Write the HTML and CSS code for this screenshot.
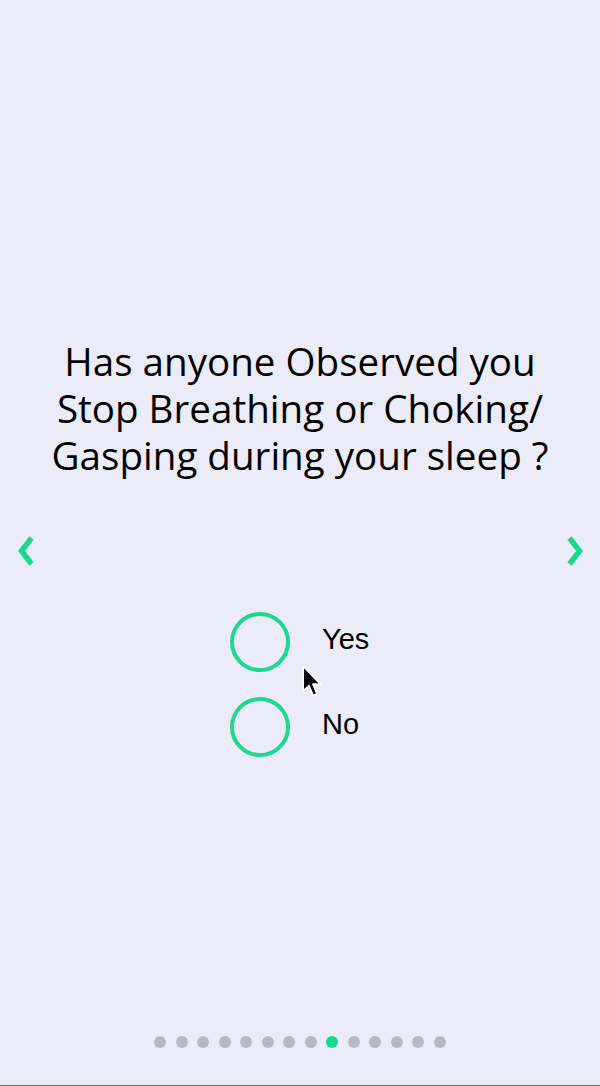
FILE: index.html
```html
<!DOCTYPE html>
<html>
<head>
<meta charset="utf-8">
<link rel="stylesheet" href="styles.css">
</head>
<body>
<div class="screen">
  <h1 class="question">Has anyone Observed you<br>Stop Breathing or Choking/<br>Gasping during your sleep ?</h1>
  <div class="nav">
    <svg class="chev" width="18" height="32" viewBox="0 0 18 32"><path d="M14.5 3 L4.5 16 L14.5 29" fill="none" stroke="#19d98f" stroke-width="5.5"/></svg>
    <svg class="chev" width="18" height="32" viewBox="0 0 18 32"><path d="M3.5 3 L13.5 16 L3.5 29" fill="none" stroke="#19d98f" stroke-width="5.5"/></svg>
  </div>
  <div class="options">
    <label class="option"><span class="radio"></span><span class="label">Yes</span></label>
    <label class="option"><span class="radio"></span><span class="label">No</span></label>
    <svg class="cursor" width="21" height="34" viewBox="0 0 18 29"><path d="M1 1 L1 22 L6 17.5 L9.5 26 L12.8 24.6 L9.4 16.3 L15.8 16.3 Z" fill="#000" stroke="#fff" stroke-width="1.4" stroke-linejoin="round"/></svg>
  </div>
  <div class="spacer"></div>
  <div class="dots">
    <span class="dot"></span><span class="dot"></span><span class="dot"></span><span class="dot"></span>
    <span class="dot"></span><span class="dot"></span><span class="dot"></span><span class="dot"></span>
    <span class="dot active"></span><span class="dot"></span><span class="dot"></span><span class="dot"></span>
    <span class="dot"></span><span class="dot"></span>
  </div>
</div>
</body>
</html>
```
FILE: styles.css
```css
html, body {
  margin: 0;
  padding: 0;
  background: #ececf8;
}
.screen {
  width: 600px;
  height: 1086px;
  box-sizing: border-box;
  border-bottom: 1px solid #6a6a70;
  display: flex;
  flex-direction: column;
  background: #ececf8;
}
.question {
  margin: 0;
  padding-top: 338px;
  font-family: "Open Sans", sans-serif;
  font-weight: 400;
  font-size: 38.6px;
  line-height: 47px;
  text-align: center;
  color: #000;
}
.nav {
  display: flex;
  justify-content: space-between;
  padding: 56px 16px 0 17px;
  height: 32px;
}
.options {
  position: relative;
  display: flex;
  flex-direction: column;
  gap: 25px;
  margin-top: 45px;
  padding-left: 230px;
}
.option {
  display: flex;
  align-items: center;
  height: 60px;
}
.radio {
  width: 60px;
  height: 60px;
  box-sizing: border-box;
  border: 4px solid #1dd890;
  border-radius: 50%;
}
.label {
  margin-left: 32px;
  font-family: "Liberation Sans", Arial, sans-serif;
  font-size: 29px;
  color: #000;
  margin-top: -5px;
}
.cursor {
  position: absolute;
  left: 302px;
  top: 53px;
}
.spacer {
  flex: 1;
}
.dots {
  display: flex;
  justify-content: center;
  gap: 9.5px;
  margin-bottom: 37px;
}
.dot {
  width: 12px;
  height: 12px;
  border-radius: 50%;
  background: #b8b8c4;
}
.dot.active {
  background: #17d88c;
}
```
